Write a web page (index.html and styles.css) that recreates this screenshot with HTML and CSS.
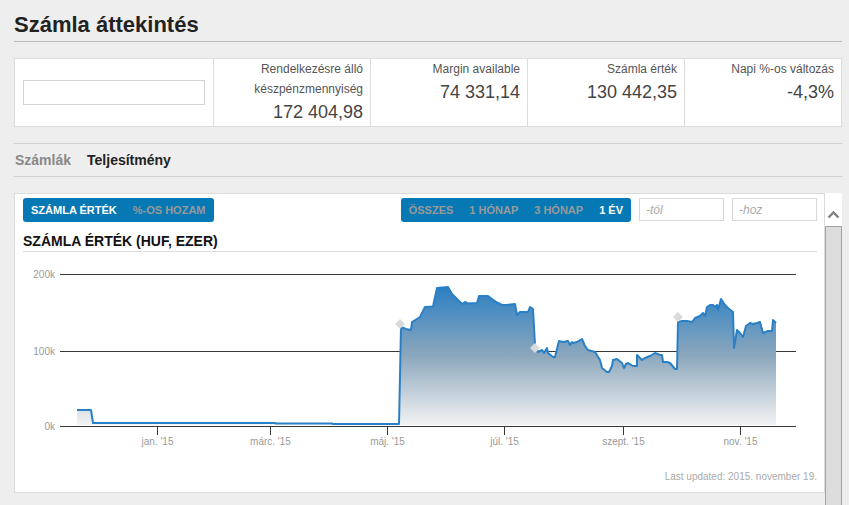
FILE: index.html
```html
<!DOCTYPE html>
<html lang="hu">
<head>
<meta charset="utf-8">
<title>Számla áttekintés</title>
<link rel="stylesheet" href="styles.css">
</head>
<body>
<div class="page">
  <h1 class="title">Számla áttekintés</h1>

  <div class="stats">
    <div class="stat stat-select"><input class="acct" type="text"></div>
    <div class="stat">
      <div class="label">Rendelkezésre álló készpénzmennyiség</div>
      <div class="value">172 404,98</div>
    </div>
    <div class="stat">
      <div class="label">Margin available</div>
      <div class="value">74 331,14</div>
    </div>
    <div class="stat">
      <div class="label">Számla érték</div>
      <div class="value">130 442,35</div>
    </div>
    <div class="stat">
      <div class="label">Napi %-os változás</div>
      <div class="value">-4,3%</div>
    </div>
  </div>

  <div class="tabs">
    <span class="tab">Számlák</span>
    <span class="tab active">Teljesítmény</span>
  </div>

  <div class="chart-row">
    <div class="panel">
      <div class="toolbar">
        <div class="btn-group">
          <span class="btn on">SZÁMLA ÉRTÉK</span>
          <span class="btn">%-OS HOZAM</span>
        </div>
        <div class="btn-group range">
          <span class="btn">ÖSSZES</span>
          <span class="btn">1 HÓNAP</span>
          <span class="btn">3 HÓNAP</span>
          <span class="btn on">1 ÉV</span>
        </div>
        <input class="date" type="text" placeholder="-tól">
        <input class="date" type="text" placeholder="-hoz">
      </div>
      <div class="chart-title">SZÁMLA ÉRTÉK (HUF, EZER)</div>
      <svg class="chart" width="793" height="219" viewBox="23 252 793 219">
        <defs>
          <linearGradient id="fillGrad" gradientUnits="userSpaceOnUse" x1="0" y1="287" x2="0" y2="426">
            <stop offset="0" stop-color="#2b7fc3"/>
            <stop offset="0.5" stop-color="#8da8bd"/>
            <stop offset="1" stop-color="#f4f4f4"/>
          </linearGradient>
        </defs>
        <g class="grid">
          <line x1="60" y1="274.5" x2="796" y2="274.5"/>
          <line x1="60" y1="351.5" x2="796" y2="351.5"/>
        </g>
        <path class="area" d="M77,410 L91,410 L93,423 L275,423 L276,423.5 L332,423.5 L333,424 L399,424 L401,327 L406,329 L411,330 L412,322 L420,317 L425,307 L433,306.5 L437,288 L448,287 L452,294 L462,304 L465,302 L468,303.5 L477,303 L479,296 L488,296 L496,302 L502,305 L507,305 L515,304 L517,315 L520,312 L528,312 L530,307 L533,309 L535,345 L538,352 L542,350 L544,353 L547,348 L548,353 L553,357 L555,357 L559,341 L563,342 L568,341 L570,345 L572,342 L573,343 L577,342 L582,339 L585,346 L588,350 L595,352 L600,360 L602,368 L607,372 L609,372 L612,366 L613,360 L617,359 L622,363 L624,368 L626,364 L628,363 L633,366 L637,366 L637,355 L642,360 L645,358 L650,356 L655,353 L660,355 L662,355 L663,362 L667,362 L670,363 L675,369 L677,369 L678,322 L682,321 L687,321 L692,322 L695,318 L700,316 L703,313 L705,316 L707,307 L710,305 L713,305 L715,307 L717,305 L718,310 L721,299 L725,305 L728,308 L733,312 L734,348 L737,330 L740,333 L743,337 L746,326 L750,323 L753,324 L757,323 L760,322 L763,333 L768,331 L772,331 L773,320 L776,323 L776,425 L77,425 Z"/>
        <path class="line" d="M77,410 L91,410 L93,423 L275,423 L276,423.5 L332,423.5 L333,424 L399,424 L401,327 L406,329 L411,330 L412,322 L420,317 L425,307 L433,306.5 L437,288 L448,287 L452,294 L462,304 L465,302 L468,303.5 L477,303 L479,296 L488,296 L496,302 L502,305 L507,305 L515,304 L517,315 L520,312 L528,312 L530,307 L533,309 L535,345 L538,352 L542,350 L544,353 L547,348 L548,353 L553,357 L555,357 L559,341 L563,342 L568,341 L570,345 L572,342 L573,343 L577,342 L582,339 L585,346 L588,350 L595,352 L600,360 L602,368 L607,372 L609,372 L612,366 L613,360 L617,359 L622,363 L624,368 L626,364 L628,363 L633,366 L637,366 L637,355 L642,360 L645,358 L650,356 L655,353 L660,355 L662,355 L663,362 L667,362 L670,363 L675,369 L677,369 L678,322 L682,321 L687,321 L692,322 L695,318 L700,316 L703,313 L705,316 L707,307 L710,305 L713,305 L715,307 L717,305 L718,310 L721,299 L725,305 L728,308 L733,312 L734,348 L737,330 L740,333 L743,337 L746,326 L750,323 L753,324 L757,323 L760,322 L763,333 L768,331 L772,331 L773,320 L776,323"/>
        <g class="markers">
          <rect x="396.5" y="320.5" width="7" height="7" transform="rotate(45 400 324)"/>
          <rect x="531.5" y="344.5" width="7" height="7" transform="rotate(45 535 348)"/>
          <rect x="674.5" y="313.5" width="7" height="7" transform="rotate(45 678 317)"/>
        </g>
        <g class="axis">
          <line x1="60" y1="426.5" x2="796" y2="426.5"/>
          <line x1="157.5" y1="426" x2="157.5" y2="435"/>
          <line x1="270.5" y1="426" x2="270.5" y2="435"/>
          <line x1="387.5" y1="426" x2="387.5" y2="435"/>
          <line x1="504.5" y1="426" x2="504.5" y2="435"/>
          <line x1="623.5" y1="426" x2="623.5" y2="435"/>
          <line x1="740.5" y1="426" x2="740.5" y2="435"/>
        </g>
        <g class="ylabels">
          <text x="55" y="278">200k</text>
          <text x="55" y="355">100k</text>
          <text x="55" y="430">0k</text>
        </g>
        <g class="xlabels">
          <text x="157.5" y="445">jan. '15</text>
          <text x="270.5" y="445">márc. '15</text>
          <text x="387.5" y="445">máj. '15</text>
          <text x="504.5" y="445">júl. '15</text>
          <text x="623.5" y="445">szept. '15</text>
          <text x="740.5" y="445">nov. '15</text>
        </g>
      </svg>
      <div class="updated">Last updated: 2015. november 19.</div>
    </div>
    <div class="scrollbar">
      <div class="scroll-up">
        <svg width="17" height="33" viewBox="0 0 17 33"><polyline points="3.5,24.5 8.5,19.5 13.5,24.5"/></svg>
      </div>
      <div class="thumb"></div>
    </div>
  </div>
</div>
</body>
</html>
```

FILE: styles.css
```css
html, body {
  margin: 0;
  background: #eeeeee;
  overflow: hidden;
}
body {
  font-family: "Liberation Sans", Arial, sans-serif;
  color: #222;
}
.page {
  padding: 0 7px 0 14px;
}
.title {
  margin: 0;
  padding: 12px 0 3px;
  font-size: 22px;
  line-height: 26px;
  font-weight: bold;
  color: #222;
  border-bottom: 1px solid #bdbdbd;
}

/* stats */
.stats {
  margin-top: 16px;
  display: grid;
  grid-template-columns: 198px repeat(4, 1fr);
  height: 67px;
  background: #fff;
  border: 1px solid #dcdcdc;
}
.stat {
  box-sizing: border-box;
  border-left: 1px solid #dcdcdc;
  padding-right: 7px;
  text-align: right;
}
.stat-select {
  border-left: 0;
  display: flex;
  align-items: center;
  padding: 0 8px;
}
.acct {
  box-sizing: border-box;
  width: 182px;
  height: 25px;
  margin: 0;
  border: 1px solid #d3d3d3;
  background: #fff;
  outline: none;
}
.label {
  font-size: 12px;
  line-height: 20px;
  color: #555;
}
.value {
  font-size: 18px;
  line-height: 26px;
  color: #444;
}

/* tabs */
.tabs {
  margin-top: 16px;
  display: flex;
  gap: 16px;
  height: 32px;
  padding-left: 1px;
  border-top: 1px solid #cfcfcf;
  border-bottom: 1px solid #cfcfcf;
  font-size: 14px;
  line-height: 32px;
  font-weight: bold;
}
.tab {
  color: #888;
}
.tab.active {
  color: #222;
}

/* chart panel */
.chart-row {
  margin-top: 16px;
  display: flex;
  align-items: flex-start;
}
.panel {
  flex: 1;
  background: #fff;
  border: 1px solid #dcdcdc;
  padding: 4px 7px 9px 8px;
}
.toolbar {
  display: flex;
  align-items: flex-start;
  height: 24px;
}
.btn-group {
  display: flex;
  height: 24px;
  background: #0679b5;
  border-radius: 3px;
}
.btn-group.range {
  margin-left: auto;
}
.btn {
  padding: 0 8px;
  font-size: 11px;
  line-height: 24px;
  font-weight: bold;
  color: #999;
  white-space: nowrap;
}
.btn.on {
  color: #fff;
}
.date {
  box-sizing: border-box;
  width: 85px;
  height: 23px;
  margin: 0 0 0 8px;
  padding: 0 6px;
  border: 1px solid #d9d9d9;
  background: #fff;
  font-family: "Liberation Sans", Arial, sans-serif;
  font-size: 12px;
  font-style: italic;
  color: #999;
  outline: none;
}
.date::placeholder {
  color: #aaa;
  font-style: italic;
}
.chart-title {
  margin-top: 10px;
  font-size: 14px;
  line-height: 19px;
  font-weight: bold;
  color: #111;
  border-bottom: 1px solid #dcdcdc;
}
.chart {
  display: block;
}
.grid line,
.axis line {
  stroke: #383838;
  stroke-width: 1;
}
.area {
  fill: url(#fillGrad);
  stroke: none;
}
.line {
  fill: none;
  stroke: #2a80c6;
  stroke-width: 2;
  stroke-linejoin: round;
}
.markers rect {
  fill: #dadada;
}
.ylabels text {
  font-family: "Liberation Sans", Arial, sans-serif;
  font-size: 10px;
  fill: #9a9a9a;
  text-anchor: end;
}
.xlabels text {
  font-family: "Liberation Sans", Arial, sans-serif;
  font-size: 10px;
  fill: #9a9a9a;
  text-anchor: middle;
}
.updated {
  text-align: right;
  font-size: 10px;
  line-height: 12px;
  color: #aaa;
}

/* scrollbar */
.scrollbar {
  width: 17px;
  background: #fff;
}
.scroll-up svg {
  display: block;
}
.scroll-up polyline {
  fill: none;
  stroke: #808080;
  stroke-width: 2.4;
}
.thumb {
  box-sizing: border-box;
  height: 300px;
  background: #dcdcdc;
  border: 1px solid #a3a3a3;
}
```
